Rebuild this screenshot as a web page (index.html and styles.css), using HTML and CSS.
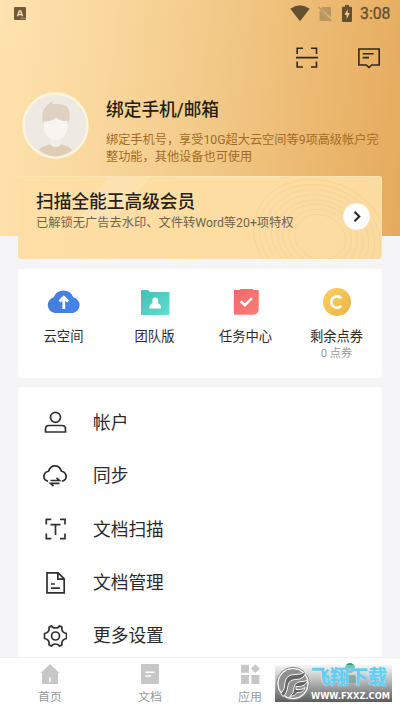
FILE: index.html
```html
<!DOCTYPE html>
<html lang="zh-CN">
<head>
<meta charset="utf-8">
<title>我的</title>
<link rel="stylesheet" href="styles.css">
</head>
<body>
<div class="app">
  <header class="hero">
    <div class="statusbar">
      <svg class="keyboard" viewBox="0 0 12 13"><rect width="12" height="13" rx="1.2" fill="#6f5938"/><path d="M3.5 9.2 5.2 4h1.6l1.7 5.2M4.4 7.500h3.200" fill="none" stroke="#f5dfb5" stroke-width="1.3"/><path d="M6.500 11.200h5" stroke="#b79a6c"/></svg>
      <div class="signals">
        <svg width="20" height="17" viewBox="0 0 20 17"><path d="M.3 3.700Q10-3.300 19.700 3.700L10 16.300Z" fill="#645031"/></svg>
        <svg class="sim" width="14" height="16" viewBox="0 0 14 16"><path d="M4.400 1H13v10.400L3 2.300ZM1.500 4 12.500 15h-11Z" fill="#b99562"/><path d="m.5 1 12.800 14" stroke="#b99562" stroke-width="1.200"/></svg>
        <svg class="battery" width="10" height="17" viewBox="0 0 10 17"><path d="M3 0h4v1.700h2q1 0 1 1V16q0 1-1 1H1q-1 0-1-1V2.700q0-1 1-1h2Z" fill="#645031"/><path d="M5.900 4 2.400 9.800h2.200V14l3.200-6H5.600Z" fill="#f3cc8c"/></svg>
        <span class="time">3:08</span>
      </div>
    </div>
    <div class="actions">
      <svg width="22" height="22" viewBox="0 0 22 22"><path d="M1.200 7V1.200H7M15 1.200h5.500V7M1.200 14.500v5.500H7M15 20h5.500v-5.500M0 10.600h22" fill="none" stroke="#342817" stroke-width="1.600"/></svg>
      <svg width="22" height="22" viewBox="0 0 22 22"><path d="M.9 2h20.300v16h-7.400L11 20.400 8.200 18H.9ZM4.700 6.700h11M4.700 10.600h6.300" fill="none" stroke="#342817" stroke-width="1.600"/></svg>
    </div>
    <div class="profile">
      <svg class="avatar" viewBox="0 0 66 66">
        <circle cx="33" cy="33" r="31.500" fill="#eee9e1" stroke="#fff4dc" stroke-width="2.400"/>
        <path d="M16.500 57.500Q19 53.500 28 51.500h10q9 2 11.500 6-7.500 6-16.500 6t-16.500-6Z" fill="#e0cdb8"/>
        <path d="M28 43h10v9q-5 5-10 0Z" fill="#f4eee8"/>
        <path d="M20.500 31q-2-12 3-16.500Q26 10.500 31 8.500q-2 3 0 3.500 16-2 16 10 0 5-1.500 9Z" fill="#dfd1c3"/>
        <path d="M21.500 29q9 0 12-4 4 4 11.500 3.500v6q-2 12.500-12 12.500t-11.500-12.500Z" fill="#f8f4f0"/>
      </svg>
      <div class="intro">
        <h1>绑定手机/邮箱</h1>
        <p>绑定手机号，享受10G超大云空间等9项高级帐户完<br>整功能，其他设备也可使用</p>
      </div>
    </div>
  </header>
  <main>
    <section class="member">
      <svg class="pattern" viewBox="0 0 364 83">
        <path d="M90 0h42L94 45H60Z" fill="#fff" opacity=".16"/>
        <g fill="none" stroke="#e6bd78" stroke-opacity=".3" stroke-width=".7">
          <ellipse cx="302" cy="60" rx="26" ry="22" transform="rotate(22 302 60)"/>
          <ellipse cx="302" cy="60" rx="32" ry="27" transform="rotate(22 302 60)"/>
          <ellipse cx="302" cy="60" rx="38" ry="32" transform="rotate(22 302 60)"/>
          <ellipse cx="302" cy="60" rx="44" ry="36" transform="rotate(22 302 60)"/>
          <ellipse cx="302" cy="60" rx="50" ry="41" transform="rotate(22 302 60)"/>
          <ellipse cx="302" cy="60" rx="56" ry="46" transform="rotate(22 302 60)"/>
          <ellipse cx="302" cy="60" rx="62" ry="51" transform="rotate(22 302 60)"/>
          <ellipse cx="302" cy="60" rx="68" ry="56" transform="rotate(22 302 60)"/>
        </g>
      </svg>
      <div class="member-text">
        <h2>扫描全能王高级会员</h2>
        <p>已解锁无广告去水印、文件转Word等20+项特权</p>
      </div>
      <svg class="go" viewBox="0 0 27 27"><circle cx="13.500" cy="13.500" r="13.300" fill="#fff"/><path d="m11.500 8.700 4.800 4.800-4.800 4.800" fill="none" stroke="#29251f" stroke-width="2"/></svg>
    </section>
    <section class="card shortcuts">
      <div class="shortcut">
        <svg viewBox="0 0 36 30"><defs><linearGradient id="blue"><stop stop-color="#477bda"/><stop offset="1" stop-color="#4285ee"/></linearGradient></defs><path d="M9 26a8 8 0 0 1-1.300-15.700 10.500 10.500 0 0 1 19.600 0A8 8 0 0 1 27 26Z" fill="url(#blue)"/><path d="M17.800 22V11M13.500 14.600l4.300-4.300 4.300 4.300" fill="none" stroke="#fff" stroke-width="2.800"/></svg>
        <span>云空间</span>
      </div>
      <div class="shortcut">
        <svg viewBox="0 0 36 30"><defs><linearGradient id="teal" x1="0" y1="0" x2="1" y2="1"><stop stop-color="#43bfb5"/><stop offset="1" stop-color="#67dcd0"/></linearGradient></defs><path d="M5 3h6l2 2h18.500q1 0 1 1v21q0 1-1 1H5q-1 0-1-1V4q0-1 1-1Z" fill="url(#teal)"/><path d="M12.500 21.500v-2q.5-2.500 3-3.500-1-5.500 2.700-5.500T21 16q2.500 1 3 3.500v2Z" fill="#fff"/></svg>
        <span>团队版</span>
      </div>
      <div class="shortcut">
        <svg viewBox="0 0 36 30"><defs><linearGradient id="red" x1="0" y1="0" x2="1" y2="1"><stop stop-color="#ee6966"/><stop offset="1" stop-color="#ff7d78"/></linearGradient></defs><path d="M6 3h5.500l1-1h12l1 1H30q.8 0 .8 1v17.500q0 6.300-6.300 6.300H7q-1.200 0-1.200-1.200Z" fill="url(#red)"/><path d="m12.800 14.200 4.100 4 7-7" fill="none" stroke="#fff" stroke-width="2.600"/></svg>
        <span>任务中心</span>
      </div>
      <div class="shortcut">
        <svg viewBox="0 0 36 30"><defs><linearGradient id="gold" x1="0" y1="0" x2="1" y2="1"><stop stop-color="#ffd15e"/><stop offset="1" stop-color="#e8b448"/></linearGradient></defs><circle cx="18" cy="15" r="14" fill="url(#gold)"/><path d="M22.200 11.200a5.700 5.700 0 1 0 0 7.700" fill="none" stroke="#fff" stroke-width="2.600"/></svg>
        <span>剩余点券</span>
        <small>0 点券</small>
      </div>
    </section>
    <section class="card menu">
      <div class="row">
        <svg viewBox="0 0 24 24"><circle cx="12.500" cy="6.300" r="5" /><path d="M2.500 21v-3q0-3.500 3.500-3.500h13q3.500 0 3.500 3.500v3Z"/></svg>
        <span>帐户</span>
      </div>
      <div class="row">
        <svg viewBox="0 0 24 24"><path d="M5 17.200C-.8 15.400-.4 8.700 5.500 7.200 8 .2 16 .2 18.500 7.200c5.900 1.500 6.300 8.200.5 10M7.500 16.500h9l-3-2.700M16.500 19.300h-9l3 2.800"/></svg>
        <span>同步</span>
      </div>
      <div class="row">
        <svg viewBox="0 0 24 24"><path d="M3.300 7.500V2.300h5M17 2.300h5v5.200M3.300 16.500v5.200h5M17 21.700h5v-5.200M7.500 7.600h10M12.500 7.600V18"/></svg>
        <span>文档扫描</span>
      </div>
      <div class="row">
        <svg viewBox="0 0 24 24"><path d="M4 1.800h11.200l6 6v14H4ZM14.800 2v6.200H21M8 13h3.800M8 17.200h9"/></svg>
        <span>文档管理</span>
      </div>
      <div class="row">
        <svg viewBox="0 0 24 24"><circle cx="12.500" cy="12" r="4"/><path d="M8.500 1.800Q9.500 4 12.500 4t4-2.200l2.500 1.500Q18 8.200 23.500 9.500v5q-5.500 1.300-4.500 6.200L16.500 22.200Q15.500 20 12.500 20t-4 2.200L6 20.700q1-4.900-4.500-6.200v-5Q7 8.200 6 3.300Z" stroke-linejoin="round"/></svg>
        <span>更多设置</span>
      </div>
    </section>
  </main>
  <nav class="tabs">
    <div class="tab">
      <svg viewBox="0 0 20 20"><path d="M10 0 19.500 9H18v10q0 1-1 1H3q-1 0-1-1V9H.5Z"/><path d="M9.200 13.500h1.600V18H9.200Z" fill="#fff"/></svg>
      <span>首页</span>
    </div>
    <div class="tab">
      <svg viewBox="0 0 20 20"><rect x="1" width="18" height="20" rx="1"/><path d="M5.500 8.200h9M5.500 12h5.500" stroke="#fff" stroke-width="1.600"/></svg>
      <span>文档</span>
    </div>
    <div class="tab">
      <svg viewBox="0 0 20 20"><path d="M1 .7h8v8H1ZM1 11h8v9H1ZM11.500 11h8v9h-8ZM15.300.3l4.400 4.400-4.400 4.400-4.400-4.400Z"/></svg>
      <span>应用</span>
    </div>
    <div class="tab active">
      <svg viewBox="0 0 20 20"><circle cx="10" cy="5" r="5"/><path d="M5 12h10l4 8H1Z"/></svg>
    </div>
  </nav>
  <div class="watermark">
    <svg viewBox="0 0 36 36"><circle cx="18" cy="18" r="16.300" fill="#e4e4e4" stroke="#777" stroke-width=".8"/><circle cx="18" cy="18" r="15" fill="#909090" stroke="#fff" stroke-width="1"/><path d="M6 28q4-4 4-11 1-8 10-8 8 0 11-4-1 9-10 9-7 0-8 6-1 8-5 11Z" fill="#656565" stroke="#f4f4f4" stroke-width="1"/><path d="M15 31q4-3 4-9 1-6 8-6 4 0 6-2-2 8-12 7v3q5 1 9-2-2 6-8 5-2 4-7 4Z" fill="#656565" stroke="#f4f4f4" stroke-width="1"/></svg>
    <div class="mark-text"><b>飞翔下载</b><i>WWW.FXXZ.COM</i></div>
  </div>
</div>
</body>
</html>
```

FILE: styles.css
```css
* { box-sizing: border-box; }
body { margin: 0; font-family: Roboto, "Noto Sans CJK SC", sans-serif; color: #2a2a2a; }
h1, h2, p { margin: 0; }
svg { display: block; flex: none; }
.app { position: relative; display: flex; flex-direction: column; height: 711px; overflow: hidden; background: #f5f5f8; }

.hero { flex: none; height: 236px; background: linear-gradient(97deg, #ffe3b0 0%, #f9d79d 27%, #f2c987 52%, #e5aa5c 100%); }
.statusbar { display: flex; justify-content: space-between; align-items: center; height: 27px; padding: 0 9px 0 14px; }
.keyboard { width: 12px; height: 13px; }
.signals { display: flex; align-items: center; }
.sim { margin-left: 8px; }
.battery { margin-left: 10px; }
.time { width: 31px; margin-left: 8px; font-size: 15.800px; line-height: 20px; color: #645031; -webkit-text-stroke: .3px #645031; white-space: nowrap; }
.actions { display: flex; justify-content: flex-end; gap: 40px; height: 41px; padding: 20px 20px 0 0; }
.profile { display: flex; gap: 17px; padding: 24px 0 0 22px; }
.avatar { width: 67px; height: 67px; }
.intro { padding-top: 5px; }
h1 { font-size: 17.700px; line-height: 26px; font-weight: 500; color: #241e15; white-space: nowrap; }
.intro p { margin-top: 9px; font-size: 12.200px; line-height: 17px; color: #a36c25; white-space: nowrap; }

main { display: flex; flex: 1; flex-direction: column; min-height: 0; margin-top: -60px; padding: 0 18px; }
.member { position: relative; display: flex; flex: none; justify-content: space-between; height: 83px; overflow: hidden; padding: 14px 11px 0 18px; border: solid #ffe5b2; border-width: 1px 1px 0 0; border-radius: 3px; background: linear-gradient(100deg, #ffdfa5, #fddda2 60%, #fbdba0); }
.pattern { position: absolute; inset: 0; width: 364px; height: 83px; }
.member-text { position: relative; }
h2 { font-size: 17.700px; line-height: 23px; font-weight: 500; color: #28231a; }
.member p { font-size: 12.250px; line-height: 19px; color: #706451; white-space: nowrap; }
.go { position: relative; width: 27px; height: 27px; margin-top: 12px; }

.card { border-radius: 4px; background: #fff; }
.shortcuts { display: grid; flex: none; grid-template-columns: repeat(4, 1fr); height: 109px; margin-top: 10px; padding-top: 18px; }
.shortcut { display: flex; flex-direction: column; align-items: center; }
.shortcut svg { width: 36px; height: 30px; }
.shortcut span { margin-top: 10px; font-size: 13.300px; line-height: 20px; }
.shortcut small { font-size: 11.200px; line-height: 14px; color: #999; }

.menu { flex: none; height: 320px; margin-top: 9px; padding-top: 9px; }
.row { display: flex; align-items: center; gap: 26px; height: 53.300px; padding-left: 25px; font-size: 17.700px; line-height: 26px; }
.row span { padding-top: 1px; }
.row svg { width: 24px; height: 24px; fill: none; stroke: #303030; stroke-width: 1.700; }

.tabs { position: absolute; right: 0; bottom: 0; left: 0; display: grid; grid-template-columns: repeat(4, 1fr); height: 54px; padding-top: 6px; border-top: 1px solid #f0f0f2; background: #fff; }
.tab { display: flex; flex-direction: column; align-items: center; font-size: 11.900px; line-height: 18px; color: #999; }
.tab svg { width: 20px; height: 20px; margin-bottom: 4px; fill: #c7c7c7; }
.active svg { fill: #20a990; margin-top: -1px; }

.watermark { position: absolute; left: 275px; top: 665px; display: flex; width: 117px; height: 37px; background: linear-gradient(rgba(235,235,235,.4), rgba(165,165,165,.8) 45%, rgba(85,85,85,.96)); }
.watermark svg { width: 36px; height: 37px; }
.mark-text { display: flex; flex-direction: column; width: 80px; }
.mark-text b { height: 25px; font-size: 19px; line-height: 26px; font-weight: 700; color: #62cdf2; -webkit-text-stroke: .5px #62cdf2; white-space: nowrap; text-shadow: 0 0 1px #fff, 0 0 1px #fff; }
.mark-text i { font: 700 8.300px/12px "DejaVu Sans", sans-serif; color: #fff; white-space: nowrap; }
```
